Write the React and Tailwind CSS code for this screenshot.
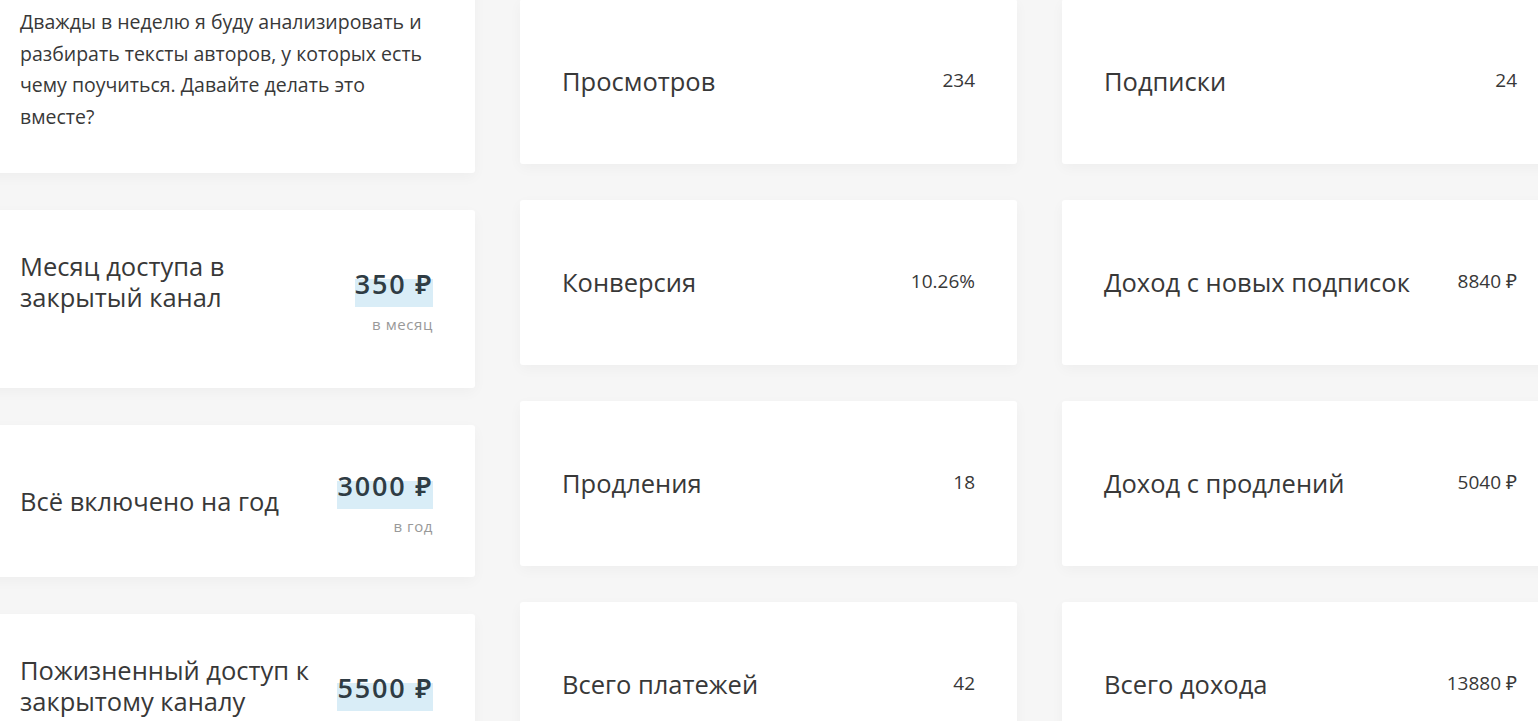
const font = { fontFamily: "'Open Sans', 'Noto Sans', sans-serif" };

const plans = [
  { title: "Месяц доступа в закрытый канал", price: "350 ₽", note: "в месяц", tall: true },
  { title: "Всё включено на год", price: "3000 ₽", note: "в год", tall: false },
  { title: "Пожизненный доступ к закрытому каналу", price: "5500 ₽", note: "навсегда", tall: true },
];

const stats = [
  { label: "Просмотров", value: "234" },
  { label: "Конверсия", value: "10.26%" },
  { label: "Продления", value: "18" },
  { label: "Всего платежей", value: "42" },
];

const money = [
  { label: "Подписки", value: "24" },
  { label: "Доход с новых подписок", value: "8840 ₽" },
  { label: "Доход с продлений", value: "5040 ₽" },
  { label: "Всего дохода", value: "13880 ₽" },
];

function PlanCard({ plan }) {
  return (
    <div
      className={`flex items-center justify-between rounded-[3px] bg-white px-[42px] shadow-[0_4px_14px_rgba(0,0,0,0.035)] ${
        plan.tall ? "h-[178px]" : "h-[152px]"
      }`}
    >
      <div
        className={`max-w-[300px] text-[25.5px] leading-[31px] text-[#383838] ${
          plan.tall ? "mb-[34px]" : ""
        }`}
      >
        {plan.title}
      </div>
      <div className="flex flex-col items-end">
        <span className="inline-block bg-[linear-gradient(to_bottom,transparent_35%,#d9edf7_35%)] pb-[3px] text-[27px] font-semibold leading-[40px] tracking-[1.8px] text-[#2f3c44]">
          {plan.price}
        </span>
        <span className="mt-[7px] text-[15px] leading-[20px] tracking-[0.6px] text-[#999999]">
          {plan.note}
        </span>
      </div>
    </div>
  );
}

function StatCard({ item }) {
  return (
    <div className="flex h-[165px] items-center justify-between rounded-[3px] bg-white px-[42px] shadow-[0_4px_14px_rgba(0,0,0,0.035)]">
      <span className="text-[25.5px] text-[#383838]">{item.label}</span>
      <span className="mb-[2px] text-[19px] text-[#383838]">{item.value}</span>
    </div>
  );
}

export default function App() {
  return (
    <div className="h-[721px] overflow-hidden bg-[#f6f6f6]" style={font}>
      <div className="ml-[-22px] grid w-[1581px] grid-cols-[497px_497px_497px] items-start gap-x-[45px]">
        <div className="mt-[-40px] flex flex-col gap-[37px]">
          <div className="rounded-[3px] bg-white px-[42px] pb-[41px] pt-[46px] shadow-[0_4px_14px_rgba(0,0,0,0.035)]">
            <p className="text-[19.5px] leading-[31.5px] text-[#383838]">
              Дважды в неделю я буду анализировать и разбирать тексты авторов, у которых есть чему
              поучиться. Давайте делать это вместе?
            </p>
          </div>
          {plans.map((p) => (
            <PlanCard key={p.price} plan={p} />
          ))}
        </div>

        <div className="mt-[-1px] flex flex-col gap-[36px]">
          {stats.map((s) => (
            <StatCard key={s.label} item={s} />
          ))}
        </div>

        <div className="mt-[-1px] flex flex-col gap-[36px]">
          {money.map((s) => (
            <StatCard key={s.label} item={s} />
          ))}
        </div>
      </div>
    </div>
  );
}
